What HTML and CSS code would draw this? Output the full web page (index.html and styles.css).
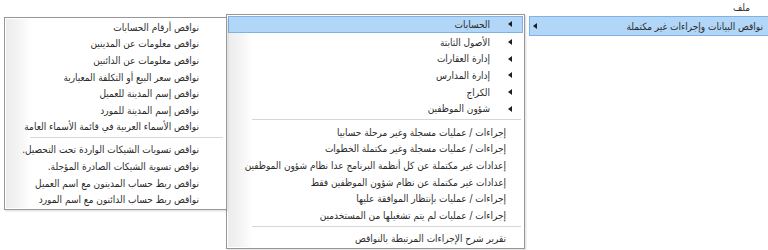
FILE: index.html
```html
<!DOCTYPE html>
<html lang="ar" dir="rtl">
<head>
    <meta charset="utf-8">
    <title>ملف</title>
    <link rel="stylesheet" href="styles.css">
</head>
<body>
    <div class="menubar">
        <span class="menubar-item">ملف</span>
    </div>

    <!-- top level popup -->
    <div class="menu menu-main">
        <div class="item active">
            <span class="label">نواقص البيانات وإجراءات غير مكتملة</span>
            <span class="arrow far"></span>
        </div>
    </div>

    <!-- second level -->
    <div class="menu menu-sub">
        <div class="item active"><span class="arrow"></span><span class="label">الحسابات</span></div>
        <div class="item"><span class="arrow"></span><span class="label">الأصول الثابتة</span></div>
        <div class="item"><span class="arrow"></span><span class="label">إدارة العقارات</span></div>
        <div class="item"><span class="arrow"></span><span class="label">إدارة المدارس</span></div>
        <div class="item"><span class="arrow"></span><span class="label">الكراج</span></div>
        <div class="item"><span class="arrow"></span><span class="label">شؤون الموظفين</span></div>
        <div class="sep"></div>
        <div class="item plain"><span class="label">إجراءات / عمليات مسجلة وغير مرحلة حسابيا</span></div>
        <div class="item plain"><span class="label">إجراءات / عمليات مسجلة وغير مكتملة الخطوات</span></div>
        <div class="item plain"><span class="label">إعدادات غير مكتملة عن كل أنظمة البرنامج عدا نظام شؤون الموظفين</span></div>
        <div class="item plain"><span class="label">إعدادات غير مكتملة عن نظام شؤون الموظفين فقط</span></div>
        <div class="item plain"><span class="label">إجراءات / عمليات بإنتظار الموافقة عليها</span></div>
        <div class="item plain"><span class="label">إجراءات / عمليات لم يتم تشغيلها من المستخدمين</span></div>
        <div class="sep"></div>
        <div class="item plain"><span class="label">تقرير شرح الإجراءات المرتبطة بالنواقص</span></div>
    </div>

    <!-- third level -->
    <div class="menu menu-leaf">
        <div class="item plain"><span class="label">نواقص أرقام الحسابات</span></div>
        <div class="item plain"><span class="label">نواقص معلومات عن المدينين</span></div>
        <div class="item plain"><span class="label">نواقص معلومات عن الدائنين</span></div>
        <div class="item plain"><span class="label">نواقص سعر البيع أو التكلفة المعيارية</span></div>
        <div class="item plain"><span class="label">نواقص إسم المدينة للعميل</span></div>
        <div class="item plain"><span class="label">نواقص إسم المدينة للمورد</span></div>
        <div class="item plain"><span class="label">نواقص الأسماء العربية في قائمة الأسماء العامة</span></div>
        <div class="sep"></div>
        <div class="item plain"><span class="label">نواقص تسويات الشيكات الواردة تحت التحصيل.</span></div>
        <div class="item plain"><span class="label">نواقص تسوية الشيكات الصادرة المؤجلة.</span></div>
        <div class="item plain"><span class="label">نواقص ربط حساب المدينون مع اسم العميل</span></div>
        <div class="item plain"><span class="label">نواقص ربط حساب الدائنون مع اسم المورد</span></div>
    </div>
</body>
</html>
```

FILE: styles.css
```css
* {
    box-sizing: border-box;
    margin: 0;
    padding: 0;
}

body {
    font-family: "DejaVu Sans Condensed", "DejaVu Sans", Tahoma, sans-serif;
    font-stretch: condensed;
    font-size: 10px;
    color: #2b2b2b;
    background: #ffffff;
    width: 768px;
    height: 250px;
    position: relative;
    overflow: hidden;
}

.menubar {
    display: flex;
    height: 14px;
    padding-right: 18px;
    align-items: center;
}

.menubar-item {
    color: #333333;
}

.menu {
    position: absolute;
    background: #ffffff;
    border: 1px solid #979797;
    display: flex;
    flex-direction: column;
    padding: 1px;
    box-shadow: 1px 1px 2px rgba(0, 0, 0, 0.15);
}

/* the grey image margin at the left edge of each popup */
.menu::before {
    content: "";
    position: absolute;
    top: 1px;
    bottom: 1px;
    left: 1px;
    width: 24px;
    background: linear-gradient(to right, #ececec, #f7f7f7 70%, #ffffff);
}

.menu-main {
    top: 14px;
    left: 527px;
    width: 250px;
    height: 24px;
    border-color: #ffffff;
    box-shadow: none;
}

.menu-main::before {
    display: none;
}

.menu-sub {
    top: 14px;
    left: 226px;
    width: 299px;
    height: 235px;
}

.menu-leaf {
    top: 17px;
    left: 4px;
    width: 223px;
    height: 193px;
}

.item {
    position: relative;
    display: flex;
    align-items: center;
    height: 18px;
    padding-right: 18px;
    border: 1px solid transparent;
    white-space: nowrap;
}

.menu-sub .item:first-child {
    margin-bottom: 1px;
}

.menu-leaf .item {
    height: 17.5px;
    padding-right: 25px;
}

.item.active {
    background: #b1d6f7;
    border-color: #80b3e4;
}

.item .arrow {
    width: 0;
    height: 0;
    border-top: 3px solid transparent;
    border-bottom: 3px solid transparent;
    border-right: 4px solid #1e1e1e;
    margin-left: 18px;
}

.menu-sub .item .arrow {
    margin-right: -8px;
}

.menu-sub .item.plain {
    padding-right: 16px;
}

.menu-main .item {
    padding-right: 11px;
    height: 20px;
}

.menu-main .label {
    flex: 1;
}

.menu-main .arrow.far {
    margin-left: 3px;
}

.sep {
    height: 7px;
    margin: 0 2px 0 4px;
    display: flex;
    flex-direction: column;
    justify-content: center;
}

.sep::before {
    content: "";
    display: block;
    height: 1px;
    background: #d7d7d7;
}

.sep::after {
    content: "";
    display: block;
    height: 1px;
    background: #ffffff;
}
```
